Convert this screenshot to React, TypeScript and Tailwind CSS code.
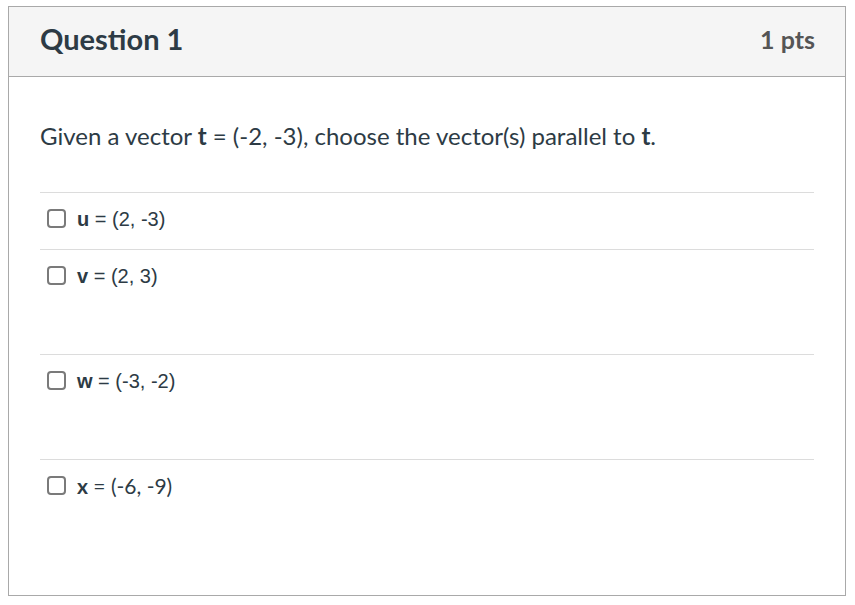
export default function App() {
  const answers = [
    { v: "u", rest: " = (2, -3)", h: "h-[57px]", font: "arial" },
    { v: "v", rest: " = (2, 3)", h: "h-[105px]", font: "arial" },
    { v: "w", rest: " = (-3, -2)", h: "h-[105px]", font: "arial" },
    { v: "x", rest: " = (-6, -9)", h: "h-[136px]", font: "lato" },
  ];

  return (
    <div className="bg-white w-[855px] h-[605px] pt-[6px] pl-[8px] font-['Lato','Liberation_Sans',sans-serif] text-[#2d3b45]">
      <div className="w-[838px] h-[590px] border border-[#a9a9a9] flex flex-col">
        {/* header */}
        <div className="h-[70px] bg-[#f5f5f5] border-b border-[#a9a9a9] flex items-center justify-between pl-[31px] pr-[30px] pb-[6px]">
          <h2 className="text-[29px] font-bold">Question 1</h2>
          <div className="text-[25px] font-bold text-[#555] pt-[2px]">1 pts</div>
        </div>

        {/* body */}
        <div className="px-[31px] pt-[44px]">
          <p className="text-[24px] leading-[30px]">
            Given a vector <b>t</b> = (-2, -3), choose the vector(s) parallel to <b>t</b>.
          </p>

          <div className="mt-[41px]">
            {answers.map((a) => (
              <div key={a.v} className={`border-t border-[#dcdcdc] ${a.h}`}>
                <label className="flex items-center h-[51px] pl-[7px]">
                  <span className="w-[19px] h-[19px] border-2 border-[#7a7a7a] rounded-[4px] bg-white shrink-0" />
                  <span
                    className={
                      a.font === "arial"
                        ? "ml-[11px] text-[20px] font-['Liberation_Sans',Arial,sans-serif]"
                        : "ml-[11px] text-[21px] font-['Lato',sans-serif]"
                    }
                  >
                    <b>{a.v}</b>
                    {a.rest}
                  </span>
                </label>
              </div>
            ))}
          </div>
        </div>
      </div>
    </div>
  );
}
